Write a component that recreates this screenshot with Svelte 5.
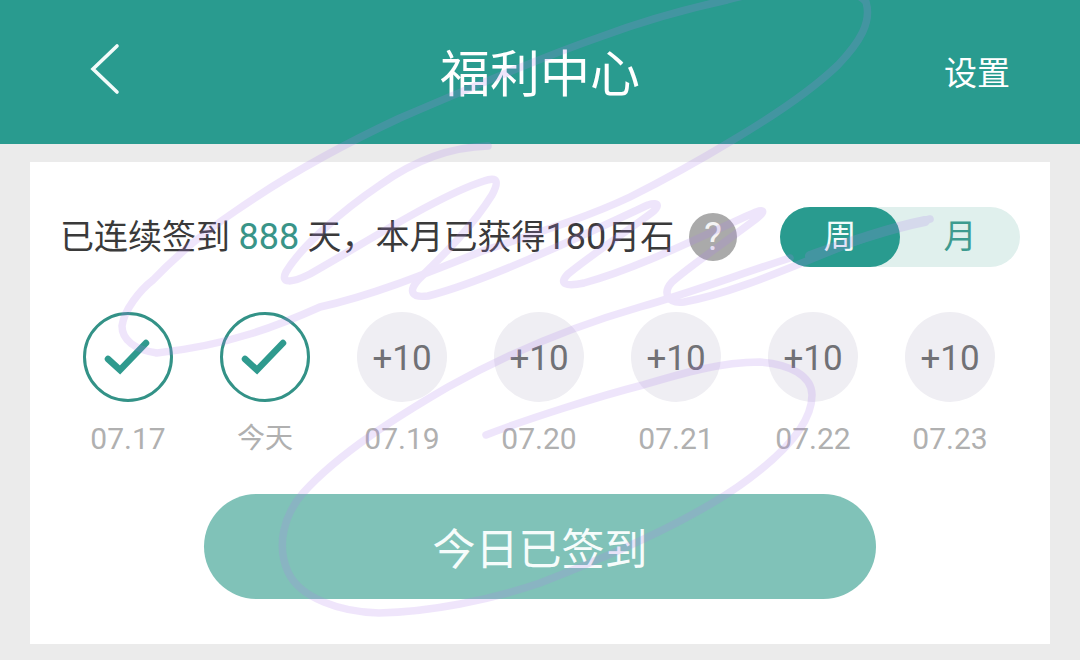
<script>
	const days = [
		{ label: '07.17', done: true },
		{ label: '今天', done: true, today: true },
		{ label: '07.19' },
		{ label: '07.20' },
		{ label: '07.21' },
		{ label: '07.22' },
		{ label: '07.23' }
	];
	const scribble = `M488 146 C450 147 415 160 380 185 C340 212 300 248 286 272 C280 284 292 283 310 274
		C370 240 440 195 484 181 C498 176 499 182 492 195 C470 230 440 258 418 280 C408 292 412 298 428 296
		C490 280 590 232 648 205 C660 201 660 207 650 214 C620 236 590 256 568 274 C558 284 566 287 584 283
		C640 268 710 232 756 212 C768 208 762 215 752 222 C720 246 690 266 672 282 C662 293 668 304 684 302
		C740 292 810 258 860 240 C885 231 910 224 930 219`;
	const scribble2 = `M486 435 C530 418 600 396 643 385 C680 374 720 362 760 362 C790 364 812 376 812 395
		C812 420 790 448 750 478 C700 516 620 552 540 583 C490 600 430 612 379 613 C340 612 300 598 288 572
		C276 545 284 515 303 493 C340 452 400 415 448 387 C500 358 560 330 640 307 C690 293 740 274 790 258`;
	const scribble3 = `M157 353 C135 350 122 340 122 326 C124 310 140 290 153 280 C180 252 210 228 237 210
		C280 180 340 146 400 118 C470 88 540 58 600 37 C640 22 690 8 727 0 C760 -10 850 -20 866 2
		C872 22 860 42 838 65 C810 92 770 118 733 140 C700 160 660 182 630 197 C590 216 540 232 480 252
		C420 276 370 296 320 307 C280 325 230 345 157 353`;
</script>

<div class="page">
	<header>
		<svg class="back" width="34" height="54" viewBox="0 0 34 54">
			<path d="M29 3 L5 26 L29 49" />
		</svg>
		<h1>福利中心</h1>
		<span class="settings">设置</span>
	</header>

	<section class="card">
		<div class="summary">
			<p>已连续签到 <em>888</em> 天，本月已获得<span class="num">180</span>月石</p>
			<span class="help">?</span>
			<div class="toggle">
				<span class="on">周</span>
				<span>月</span>
			</div>
		</div>

		<ul>
			{#each days as day}
				<li>
					{#if day.done}
						<span class="dot done">
							<svg width="48" height="36" viewBox="0 0 48 36">
								<path d="M5 17 L17 28 L43 1" />
							</svg>
						</span>
					{:else}
						<span class="dot">+10</span>
					{/if}
					<span class="date" class:today={day.today}>{day.label}</span>
				</li>
			{/each}
		</ul>

		<button>今日已签到</button>
	</section>

	<svg class="ink" width="1080" height="660" viewBox="0 0 1080 660">
		<g>
			<path d={scribble} />
			<path d={scribble2} />
			<path d={scribble3} />
			<path class="thick" d="M810 256 C850 242 890 228 925 221" />
		</g>
	</svg>
</div>

<style>
	:global(body) {
		background: #ebebeb;
	}
	.page {
		position: relative;
		width: 1080px;
		height: 660px;
		overflow: hidden;
		font-family: Roboto, "Noto Sans CJK SC", sans-serif;
	}
	header {
		height: 144px;
		background: #299b8f;
		color: #fff;
		display: grid;
		grid-template-columns: 1fr auto 1fr;
		align-items: center;
		padding: 0 70px 0 88px;
		box-sizing: border-box;
	}
	.back path {
		fill: none;
		stroke: #f2fbfa;
		stroke-width: 3.6;
		stroke-linecap: round;
	}
	.back {
		margin-top: -4px;
	}
	h1 {
		margin: 6px 0 0 -18px;
		font-size: 50px;
		font-weight: 400;
		line-height: 60px;
	}
	.settings {
		justify-self: end;
		font-size: 33px;
		line-height: 40px;
		margin-top: 4px;
	}
	.card {
		margin: 18px 30px 0;
		height: 482px;
		background: #fff;
		box-sizing: border-box;
		padding: 45px 30px 0 30px;
	}
	.summary {
		display: flex;
		align-items: center;
		height: 60px;
	}
	.summary p {
		margin: 0;
		font-size: 34px;
		line-height: 62px;
		color: #3a3a3a;
		white-space: nowrap;
		width: 629px;
	}
	.summary em,
	.summary .num {
		font-size: 36px;
	}
	.summary em {
		font-style: normal;
		color: #399488;
	}
	.help {
		width: 48px;
		height: 48px;
		border-radius: 50%;
		background: #aaa;
		color: #f4f4f4;
		font-size: 38px;
		line-height: 48px;
		text-align: center;
		margin-right: 43px;
		flex: none;
	}
	.toggle {
		display: flex;
		width: 240px;
		height: 60px;
		border-radius: 30px;
		background: #e0f0ed;
		color: #3e9b8f;
		font-size: 33px;
		line-height: 60px;
		text-align: center;
		flex: none;
	}
	.toggle span {
		width: 120px;
		border-radius: 30px;
	}
	.toggle .on {
		background: #299b8f;
		color: #f2fbfa;
	}
	ul {
		list-style: none;
		margin: 45px 0 0;
		padding: 0 0 0 23px;
		display: flex;
		gap: 47px;
	}
	li {
		width: 90px;
		display: flex;
		flex-direction: column;
		align-items: center;
	}
	.dot {
		width: 90px;
		height: 90px;
		border-radius: 50%;
		background: #efeef3;
		color: #717175;
		font-size: 35px;
		padding-top: 3px;
		display: flex;
		align-items: center;
		justify-content: center;
		box-sizing: border-box;
	}
	.dot.done {
		background: #fff;
		border: 3px solid #339287;
		padding-top: 0;
	}
	.dot.done path {
		fill: none;
		stroke: #2f9a8e;
		stroke-width: 6.5;
		stroke-linecap: round;
		stroke-linejoin: miter;
	}
	.dot.done svg {
		margin-left: -2px;
		margin-top: 6px;
		overflow: visible;
	}
	.date {
		margin-top: 19px;
		font-size: 30px;
		line-height: 36px;
		color: #b0b0b0;
		white-space: nowrap;
	}
	.date.today {
		font-size: 28px;
	}
	button {
		display: block;
		width: 672px;
		height: 105px;
		margin: 37px 0 0 144px;
		border: none;
		border-radius: 53px;
		background: #80c2b8;
		color: #f6fcfb;
		font-family: inherit;
		font-size: 43px;
		padding: 0 0 2px;
	}
	.ink {
		position: absolute;
		left: 0;
		top: 0;
		pointer-events: none;
	}
	.ink g {
		opacity: 0.2;
	}
	.ink path {
		fill: none;
		stroke: #ad7fec;
		stroke-width: 7.5;
		stroke-linecap: round;
		stroke-linejoin: round;
	}
	.ink path.thick {
		stroke-width: 10;
	}
</style>
